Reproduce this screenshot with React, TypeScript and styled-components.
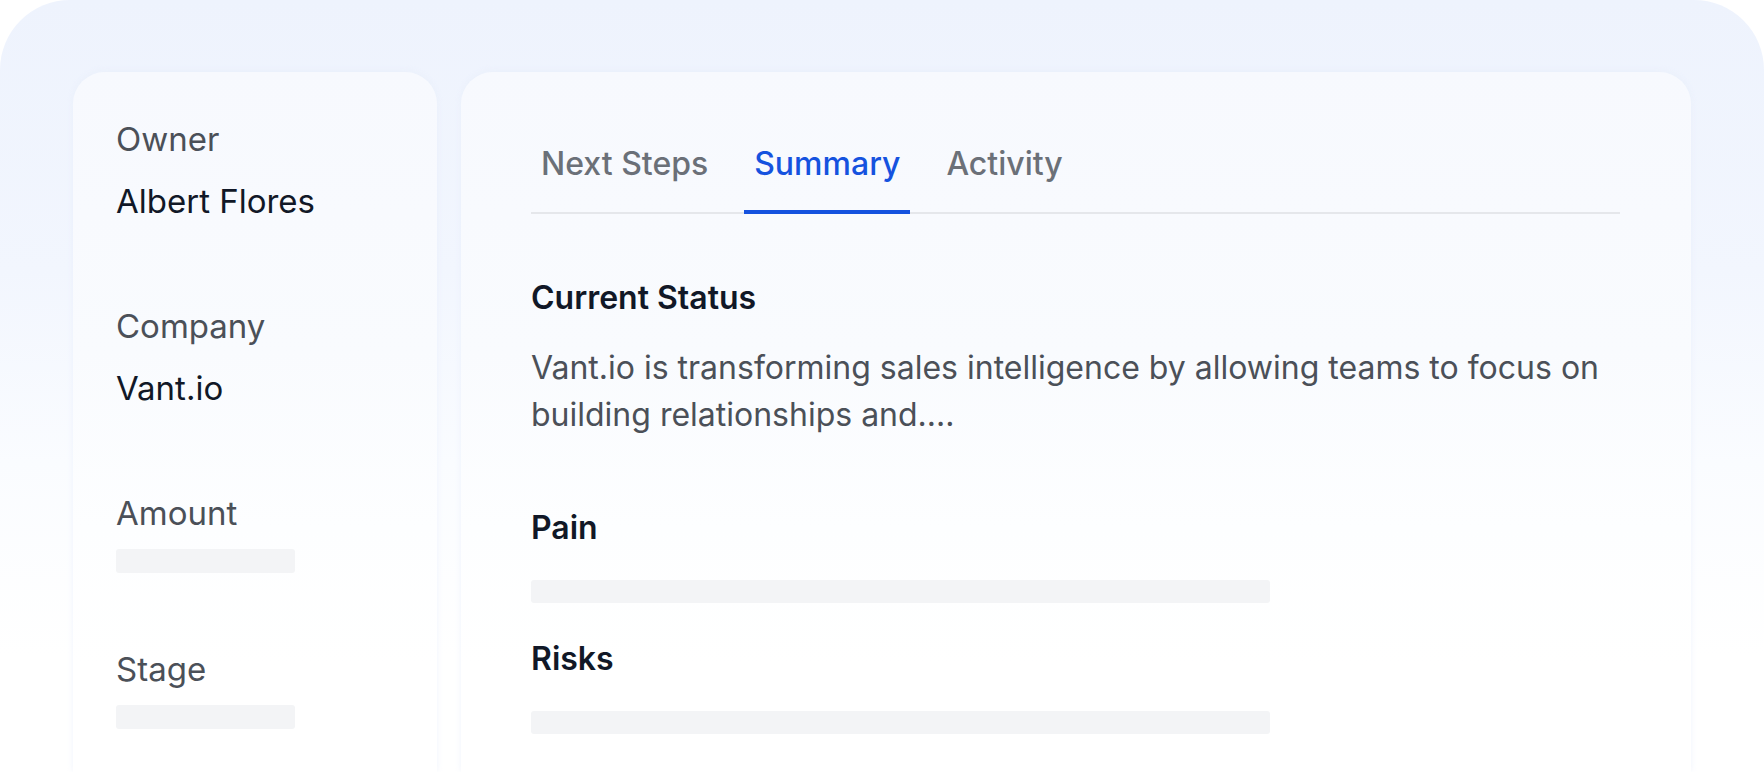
import styled, { createGlobalStyle } from "styled-components";

const GlobalStyle = createGlobalStyle`
  * { box-sizing: border-box; }
  html, body { margin: 0; padding: 0; background: #ffffff; }
  body {
    width: 1764px;
    height: 772px;
    overflow: hidden;
    font-family: Inter, "Noto Sans", "Liberation Sans", sans-serif;
    -webkit-font-smoothing: antialiased;
  }
`;

type DealField = { label: string; value?: string };

const fields: DealField[] = [
  { label: "Owner", value: "Albert Flores" },
  { label: "Company", value: "Vant.io" },
  { label: "Amount" },
  { label: "Stage" },
];

const tabs = ["Next Steps", "Summary", "Activity"];

export default function App() {
  return (
    <>
      <GlobalStyle />
      <Frame>
        <SideCard>
          {fields.map((f) => (
            <Field key={f.label}>
              <Label>{f.label}</Label>
              {f.value ? <Value>{f.value}</Value> : <SideSkeleton />}
            </Field>
          ))}
        </SideCard>

        <MainCard>
          <TabList>
            {tabs.map((t) => (
              <Tab key={t} $active={t === "Summary"}>
                {t}
              </Tab>
            ))}
          </TabList>

          <Section>
            <Heading>Current Status</Heading>
            <Paragraph>
              Vant.io is transforming sales intelligence by allowing teams to focus on
              building relationships and....
            </Paragraph>
          </Section>

          <Section $gap={70}>
            <Heading>Pain</Heading>
            <MainSkeleton />
          </Section>

          <Section $gap={36}>
            <Heading>Risks</Heading>
            <MainSkeleton />
          </Section>
        </MainCard>
      </Frame>
    </>
  );
}

const Frame = styled.div`
  width: 1764px;
  height: 772px;
  border-radius: 70px 70px 0 0;
  background: linear-gradient(180deg, #eef3fd 0%, #f2f6fe 35%, #fafcff 60%, #ffffff 85%);
  padding: 72px 73px 0 73px;
  display: flex;
  gap: 24px;
`;

const Card = styled.div`
  border-radius: 32px 32px 0 0;
  background: linear-gradient(180deg, #f7f9fe 0%, #f9fbfe 40%, #fdfeff 65%, #ffffff 85%);
  box-shadow: 0 -1px 6px rgba(230, 236, 250, 0.6);
  height: 100%;
`;

const SideCard = styled(Card)`
  width: 364px;
  flex-shrink: 0;
  padding: 47px 43px 0 43px;
  display: flex;
  flex-direction: column;
  gap: 85px;
`;

const Field = styled.div`
  display: flex;
  flex-direction: column;
`;

const Label = styled.div`
  font-size: 33px;
  line-height: 40px;
  color: #4b5058;
  font-weight: 400;
`;

const Value = styled.div`
  margin-top: 22px;
  font-size: 33px;
  line-height: 40px;
  color: #111827;
  font-weight: 400;
`;

const SideSkeleton = styled.div`
  margin: 16px 0 -9px 0;
  width: 179px;
  height: 24px;
  border-radius: 3px;
  background: #f3f4f6;
`;

const MainCard = styled(Card)`
  flex: 1;
  padding: 72px 71px 0 70px;
`;

const TabList = styled.div`
  display: flex;
  gap: 26px;
  border-bottom: 2px solid #e5e7eb;
`;

const Tab = styled.div<{ $active?: boolean }>`
  padding: 0 10px 26px 10px;
  margin-bottom: -2px;
  font-size: 32px;
  line-height: 40px;
  font-weight: 500;
  color: ${(p) => (p.$active ? "#1552df" : "#6b7078")};
  border-bottom: 4px solid ${(p) => (p.$active ? "#1552df" : "transparent")};
`;

const Section = styled.div<{ $gap?: number }>`
  margin-top: ${(p) => p.$gap ?? 64}px;
  display: flex;
  flex-direction: column;
`;

const Heading = styled.div`
  font-size: 32px;
  line-height: 40px;
  font-weight: 600;
  color: #111827;
`;

const Paragraph = styled.p`
  margin: 26px 0 0 0;
  font-size: 32px;
  line-height: 47px;
  color: #4b5058;
`;

const MainSkeleton = styled.div`
  margin-top: 32px;
  width: 739px;
  height: 23px;
  border-radius: 3px;
  background: #f3f4f6;
`;
